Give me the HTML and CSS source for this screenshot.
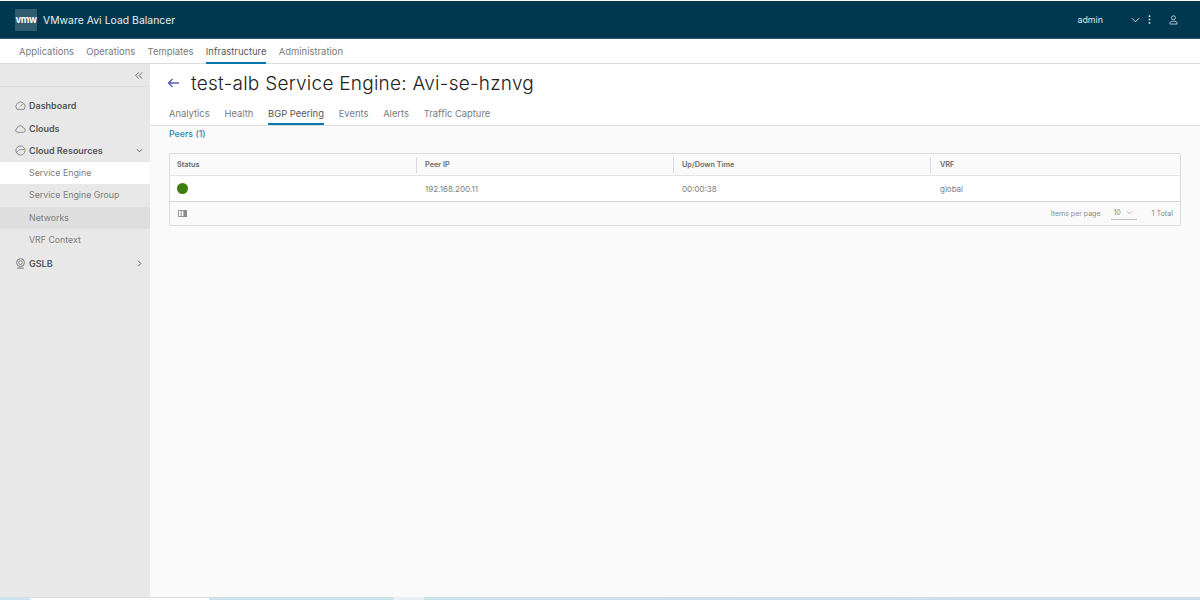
FILE: index.html
```html
<!DOCTYPE html>
<html lang="en">
<head>
<meta charset="utf-8">
<title>VMware Avi Load Balancer</title>
<link rel="stylesheet" href="styles.css">
</head>
<body>
<div class="app">
  <header class="topbar">
    <div class="brand">
      <span class="logo">vmw</span>
      <span class="product">VMware Avi Load Balancer</span>
    </div>
    <div class="user">
      <span class="username">admin</span>
      <svg class="i-chev-top" viewBox="0 0 10 6"><path d="M1 1l4 4 4-4" fill="none" stroke="#dfe8ec" stroke-width="1"/></svg>
      <svg class="i-dots" viewBox="0 0 4 12"><circle cx="2" cy="1.5" r="1.2" fill="#e6eef1"/><circle cx="2" cy="6" r="1.2" fill="#e6eef1"/><circle cx="2" cy="10.5" r="1.2" fill="#e6eef1"/></svg>
      <svg class="i-user" viewBox="0 0 10 11"><circle cx="5" cy="3" r="2.2" fill="none" stroke="#cfdce2" stroke-width=".9"/><path d="M1 10V8.6C1 7.5 3 6.8 5 6.8s4 .7 4 1.8V10z" fill="none" stroke="#cfdce2" stroke-width=".9"/></svg>
    </div>
  </header>
  <nav class="mainnav">
    <a class="mainlink">Applications</a>
    <a class="mainlink">Operations</a>
    <a class="mainlink">Templates</a>
    <a class="mainlink active">Infrastructure</a>
    <a class="mainlink">Administration</a>
  </nav>
  <div class="body">
    <aside class="sidebar">
      <div class="collapse">
        <svg class="i-collapse" viewBox="0 0 9 8"><path d="M4 .5L.8 4 4 7.5M8 .5L4.8 4 8 7.5" fill="none" stroke="#555" stroke-width="1"/></svg>
      </div>
      <div class="side-list">
        <div class="side-item">
          <svg class="side-icon" viewBox="0 0 12 12"><path d="M2 10.2A5 5 0 1 1 10 10.2z" fill="none" stroke="#777" stroke-width=".9"/><path d="M6 7l2.4-2.6" stroke="#777" stroke-width=".9"/></svg>
          <span>Dashboard</span>
        </div>
        <div class="side-item">
          <svg class="side-icon" viewBox="0 0 12 12"><path d="M3 10.2A2.3 2.3 0 0 1 2.4 5.7 3.4 3.4 0 0 1 9 5.3a2.5 2.5 0 0 1 .2 4.9z" fill="none" stroke="#777" stroke-width=".9"/></svg>
          <span>Clouds</span>
        </div>
        <div class="side-item">
          <svg class="side-icon" viewBox="0 0 12 12"><circle cx="6" cy="6" r="5" fill="none" stroke="#777" stroke-width=".9"/><path d="M2 8.5C3.5 5 6 4.5 10 5" fill="none" stroke="#777" stroke-width=".9"/></svg>
          <span class="side-label">Cloud Resources</span>
          <svg class="side-chev" viewBox="0 0 8 8"><path d="M1 2.5l3 3 3-3" fill="none" stroke="#555" stroke-width="1"/></svg>
        </div>
        <div class="side-sub current">Service Engine</div>
        <div class="side-sub">Service Engine Group</div>
        <div class="side-sub hover">Networks</div>
        <div class="side-sub">VRF Context</div>
        <div class="side-item">
          <svg class="side-icon" viewBox="0 0 12 12"><circle cx="6" cy="5" r="4.3" fill="none" stroke="#666" stroke-width=".9"/><circle cx="6" cy="5" r="2" fill="none" stroke="#666" stroke-width=".8"/><path d="M2.5 11h7" stroke="#666" stroke-width="1"/></svg>
          <span class="side-label">GSLB</span>
          <svg class="side-chev" viewBox="0 0 8 8"><path d="M2.5 1l3 3-3 3" fill="none" stroke="#555" stroke-width="1"/></svg>
        </div>
      </div>
    </aside>
    <main class="content">
      <div class="page-head">
        <div class="title-row">
          <svg class="i-back" viewBox="0 0 12 10"><path d="M11.5 5H1M5 1L1 5l4 4" fill="none" stroke="#5a5fa8" stroke-width="1.4"/></svg>
          <h1 class="title">test-alb Service Engine: Avi-se-hznvg</h1>
        </div>
        <div class="tabs">
          <a class="tab">Analytics</a>
          <a class="tab">Health</a>
          <a class="tab active">BGP Peering</a>
          <a class="tab">Events</a>
          <a class="tab">Alerts</a>
          <a class="tab">Traffic Capture</a>
        </div>
      </div>
      <div class="section">
        <div class="peers">Peers (1)</div>
        <div class="grid">
          <div class="grid-row grid-head">
            <div class="cell">Status</div>
            <div class="cell">Peer IP</div>
            <div class="cell">Up/Down Time</div>
            <div class="cell">VRF</div>
          </div>
          <div class="grid-row grid-data">
            <div class="cell"><span class="dot"></span></div>
            <div class="cell">192.168.200.11</div>
            <div class="cell">00:00:38</div>
            <div class="cell">global</div>
          </div>
          <div class="grid-foot">
            <svg class="i-columns" viewBox="0 0 10 8"><rect x=".5" y=".5" width="9" height="7" fill="none" stroke="#8a8a8a"/><path d="M3.5 0v8" stroke="#8a8a8a"/><rect x="6" y="0" width="4" height="8" fill="#8a8a8a"/></svg>
            <div class="pager">
              <span>Items per page</span>
              <span class="select">10
                <svg class="i-select" viewBox="0 0 8 5"><path d="M1 1l3 3 3-3" fill="none" stroke="#999" stroke-width=".8"/></svg>
              </span>
              <span class="total">1 Total</span>
            </div>
          </div>
        </div>
      </div>
    </main>
  </div>
  <div class="strip">
    <span class="strip-a"></span><span class="strip-b"></span><span class="strip-c"></span><span class="strip-d"></span><span class="strip-e"></span>
  </div>
</div>
</body>
</html>
```
FILE: styles.css
```css
* { box-sizing: border-box; }
html, body { margin: 0; height: 100%; }
body { font-family: "Inter", "Liberation Sans", sans-serif; background: #fafafa; overflow: hidden; }
svg { display: block; flex: none; }
.app { height: 600px; display: flex; flex-direction: column; }

.topbar { height: 38px; margin-top: 1px; flex: none; background: #00384f; border-bottom: 1px solid #2d5a6b; display: flex; align-items: center; justify-content: space-between; padding: 0 22px 0 15px; color: #fff; }
.brand { display: flex; align-items: center; gap: 6px; }
.logo { width: 22px; height: 22px; background: #2f5c6e; border-radius: 1px; font-size: 9.5px; font-weight: 700; letter-spacing: -.4px; display: flex; align-items: center; justify-content: center; }
.product { font-size: 10.35px; color: #e8eff2; letter-spacing: .05px; }
.user { display: flex; align-items: center; }
.username { font-size: 8.9px; color: #dfe8ec; margin-right: 28px; }
.i-chev-top { width: 9px; height: 6px; }
.i-dots { width: 3px; height: 9px; margin: 0 18px 0 8px; }
.i-user { width: 9px; height: 10px; }

.mainnav { height: 25px; flex: none; background: #fff; border-bottom: 1px solid #d8dedd; display: flex; gap: 12.3px; padding-left: 19px; }
.mainlink { font-size: 9.45px; line-height: 25px; color: #7a7a7a; height: 25px; }
.mainlink.active { color: #55595c; border-bottom: 2px solid #0a77ac; }

.body { flex: 1; min-height: 0; display: flex; }
.sidebar { width: 150px; flex: none; background: #e8e8e8; }
.collapse { height: 23px; border-bottom: 1px solid #dcdcdc; display: flex; align-items: center; justify-content: flex-end; padding-right: 7px; }
.i-collapse { width: 8px; height: 7px; }
.side-list { padding-top: 7.3px; }
.side-item { height: 22.5px; display: flex; align-items: center; gap: 3px; padding: 0 7px 0 15px; font-size: 9px; font-weight: 600; color: #565656; }
.side-label { flex: 1; }
.side-icon { width: 11px; height: 11px; }
.side-chev { width: 7px; height: 7px; }
.side-sub { height: 22.5px; line-height: 22px; padding-left: 29px; font-size: 8.8px; color: #7d7d7d; }
.side-sub.current { background: #fff; }
.side-sub.hover { background: #dfdfdf; }

.content { flex: 1; min-width: 0; }
.page-head { height: 62px; background: #fff; border-bottom: 1px solid #d8dedd; padding-left: 19px; display: flex; flex-direction: column; }
.title-row { display: flex; align-items: center; gap: 11px; height: 39px; margin-left: -2px; }
.i-back { width: 13px; height: 10px; }
.title { margin: 0; font-size: 19px; font-weight: 300; color: #222; letter-spacing: .25px; }
.tabs { display: flex; gap: 14.8px; height: 23px; }
.tab { font-size: 9.4px; line-height: 23px; color: #7b7b7b; height: 23px; }
.tab.active { color: #565656; border-bottom: 2px solid #0a77ac; }

.section { padding: 0 19px 0 19px; }
.peers { height: 27px; padding-top: 2px; font-size: 8.8px; font-weight: 500; color: #2f86b0; line-height: 11px; }
.grid { background: #fafafa; border: 1px solid #dcdcdc; border-radius: 2px; height: 73px; }
.grid-row { display: grid; grid-template-columns: 247px 257px 257px 1fr; }
.grid-head { height: 22px; border-bottom: 1px solid #e3e3e3; font-size: 7.3px; font-weight: 600; color: #6a6a6a; align-items: center; }
.grid-head .cell { border-right: 1px solid #dcdcdc; height: 16px; line-height: 16px; }
.grid-head .cell:last-child { border-right: 0; }
.grid-data { height: 26px; background: #fff; border-bottom: 1px solid #d5d5d5; font-size: 8px; color: #808080; align-items: center; }
.cell { padding-left: 8px; }
.cell:first-child { padding-left: 7px; }
.cell:last-child { padding-left: 9px; }
.dot { display: block; width: 11px; height: 11px; border-radius: 50%; background: #3f7f10; }
.grid-foot { height: 22px; display: flex; align-items: center; justify-content: space-between; padding: 0 7px 0 8px; font-size: 7px; color: #8a8a8a; }
.i-columns { width: 9px; height: 7px; }
.pager { display: flex; align-items: center; gap: 10px; }
.total { margin-left: 5px; font-size: 7.2px; }
.select { width: 26px; height: 13px; border-bottom: 1px solid #c0c0c0; padding-left: 3px; line-height: 13px; display: flex; align-items: center; justify-content: space-between; padding-right: 4px; }
.i-select { width: 7px; height: 5px; }

.strip { height: 3px; flex: none; display: flex; background: #cfe3ec; }
.strip-a { width: 30px; }
.strip-b { width: 179px; background: #fff; border-top: 1px solid #dcdcdc; }
.strip-c { width: 185px; }
.strip-d { width: 30px; background: #e9f0f5; }
.strip-e { flex: 1; background: linear-gradient(90deg, #cfe3ec, #d0dcea); }
```
